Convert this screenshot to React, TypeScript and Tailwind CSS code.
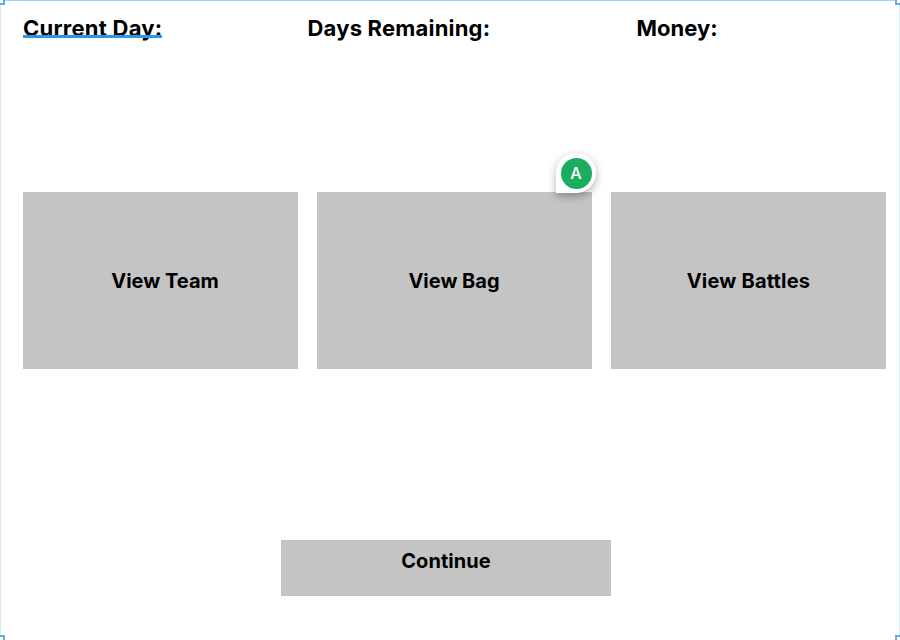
const card = "flex h-[177px] w-[275px] items-center justify-center bg-[#c4c4c4] text-[20px] font-bold";
const handle = "absolute h-[10px] w-[10px] border-2 border-[#5fb0e6] bg-white";

export default function App() {
  return (
    <div className="relative h-[640px] w-[900px] overflow-hidden bg-white pl-[23px] font-['Inter',sans-serif] text-black">
      <header className="flex h-[192px] pt-[14px] text-[22px] leading-[28px] font-bold whitespace-nowrap">
        <div className="w-[284.5px]">
          <span className="relative inline-block tracking-[0.25px]">
            Current Day:
            <span className="absolute top-[21px] left-0 h-[3px] w-full bg-[#2b96e8]" />
          </span>
        </div>
        <div className="w-[329px] tracking-[0.2px]">Days Remaining:</div>
        <div>Money:</div>
      </header>
      <main className="flex gap-[19px]">
        <button className={card}>
          <span className="ml-[9px]">View Team</span>
        </button>
        <button className={card}>
          <span className="-ml-[1px]">View Bag</span>
        </button>
        <button className={card}>
          <span className="tracking-[0.2px]">View Battles</span>
        </button>
      </main>
      <button className="mt-[171px] ml-[258px] flex h-[56px] w-[330px] items-start justify-center bg-[#c4c4c4] pt-[6px] text-[20px] font-bold tracking-[0.05px]">
        Continue
      </button>
      <div className="absolute top-[153px] left-[556px] flex h-[40px] w-[40px] items-center justify-center rounded-[20px] rounded-bl-none bg-white shadow-[0_3px_8px_rgba(0,0,0,0.32)]">
        <span className="flex h-[31px] w-[31px] items-center justify-center rounded-full bg-[#1bad5f] text-[16px] font-medium text-white">A</span>
      </div>
      <div className="pointer-events-none absolute inset-0 border-x border-t border-x-[#d9edf9] border-t-[#a5d2ef]" />
      <i className={`${handle} -top-[5px] -left-[5px]`} />
      <i className={`${handle} -top-[5px] -right-[5px]`} />
      <i className={`${handle} -bottom-[5px] -left-[5px]`} />
      <i className={`${handle} -right-[5px] -bottom-[5px]`} />
    </div>
  );
}
